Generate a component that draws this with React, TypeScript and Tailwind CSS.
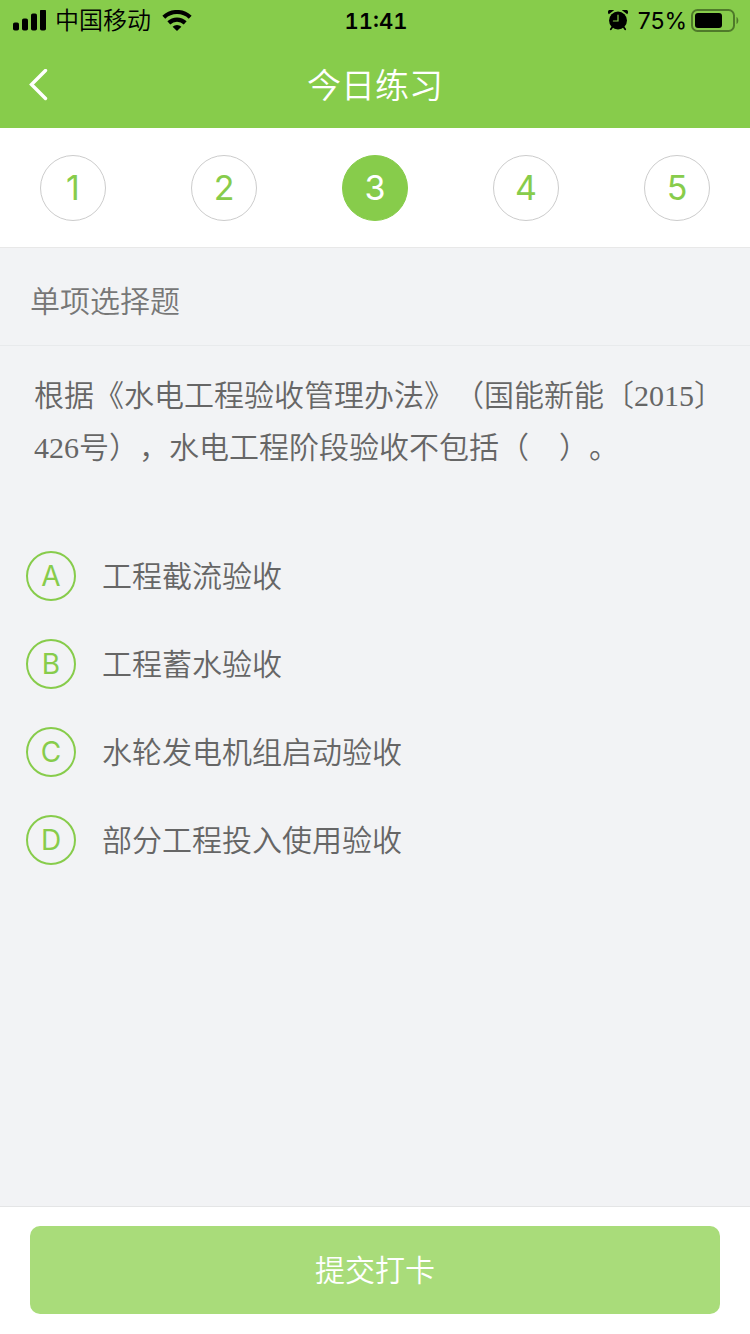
import React, { useState } from 'react';

const steps = [1, 2, 3, 4, 5];

const options = [
  { key: 'A', text: '工程截流验收' },
  { key: 'B', text: '工程蓄水验收' },
  { key: 'C', text: '水轮发电机组启动验收' },
  { key: 'D', text: '部分工程投入使用验收' },
];

function SignalIcon() {
  return (
    <svg className="h-[22px] w-[34px]" viewBox="0 0 34 22" fill="currentColor" aria-hidden="true">
      <rect x="0" y="12.5" width="6" height="8" rx="1.8" />
      <rect x="9" y="8.5" width="6" height="12" rx="1.8" />
      <rect x="18" y="3.5" width="6" height="17" rx="1.8" />
      <rect x="27" y="-0.5" width="6" height="21" rx="1.8" />
    </svg>
  );
}

function WifiIcon() {
  return (
    <svg className="h-[22px] w-[30px]" viewBox="0 0 30 22" aria-hidden="true">
      <g fill="none" stroke="currentColor" strokeWidth="4.2">
        <path d="M1.8 7.2a19.4 19.4 0 0 1 26.4 0" />
        <path d="M6.8 12.9a12 12 0 0 1 16.4 0" />
      </g>
      <path d="M10.6 16.8a6.6 6.6 0 0 1 8.8 0L15 21z" fill="currentColor" />
    </svg>
  );
}

function AlarmIcon() {
  return (
    <svg className="h-[22px] w-5" viewBox="0 0 20 22" fill="none" aria-hidden="true">
      <circle cx="10" cy="10.5" r="9" fill="currentColor" />
      <path d="M0.8 4.2A3.2 3.2 0 0 1 6 0.2z" fill="currentColor" />
      <path d="M19.2 4.2A3.2 3.2 0 0 0 14 0.2z" fill="currentColor" />
      <path d="M4.4 17l-1.6 2.2M15.6 17l1.6 2.2" stroke="currentColor" strokeWidth="1.8" strokeLinecap="round" />
      <path d="M10 5.2v5.8H5.4" stroke="#87cc4b" strokeWidth="1.2" strokeLinecap="round" />
    </svg>
  );
}

function BatteryIcon() {
  return (
    <svg className="h-6 w-12" viewBox="0 0 48 24" aria-hidden="true">
      <rect x="1" y="1" width="42" height="21" rx="5.5" fill="none" stroke="#4f7a2a" strokeWidth="2" />
      <rect x="4" y="4" width="27" height="15" rx="3" fill="currentColor" />
      <path d="M45.5 8c2.4 1 2.4 6 0 7z" fill="#4f7a2a" />
    </svg>
  );
}

export default function App() {
  const [current, setCurrent] = useState(3);
  const [answer, setAnswer] = useState('');

  return (
    <div className="flex min-h-screen flex-col bg-[#f2f3f5] font-['Inter','Noto_Sans_CJK_SC',sans-serif] font-[350]">
      <header className="bg-[#87cc4b]">
        <div className="grid h-[42px] grid-cols-3 items-center pr-[11px] pl-[13px] text-2xl leading-10 text-black">
          <div className="flex items-center">
            <SignalIcon />
            <span className="mr-[11px] ml-2 whitespace-nowrap">中国移动</span>
            <WifiIcon />
          </div>
          <span className="text-center text-[22px] font-semibold tabular-nums">11:41</span>
          <div className="flex items-center justify-end">
            <AlarmIcon />
            <span className="mr-1 ml-[10px] text-[23px] font-normal">75%</span>
            <BatteryIcon />
          </div>
        </div>
        <div className="grid h-[86px] grid-cols-[1fr_auto_1fr] items-center px-7 text-white">
          <button type="button" aria-label="返回" className="justify-self-start">
            <svg className="h-8 w-[22px]" viewBox="0 0 22 32" fill="none" aria-hidden="true">
              <path d="M17.5 1.5L3.5 15.5l14 14" stroke="currentColor" strokeWidth="3.4" strokeLinecap="round" />
            </svg>
          </button>
          <h1 className="text-[34px] font-[350]">今日练习</h1>
        </div>
      </header>

      <nav className="flex h-[120px] items-center justify-between border-b border-[#e8e8e8] bg-white px-10">
        {steps.map((n) => (
          <button
            key={n}
            type="button"
            onClick={() => setCurrent(n)}
            className={`size-[66px] rounded-full border text-[34px] font-normal ${
              n === current
                ? 'border-[#87cc4b] bg-[#87cc4b] text-white'
                : 'border-[#cccccc] bg-white text-[#87cc4b]'
            }`}
          >
            {n}
          </button>
        ))}
      </nav>

      <main className="flex-1">
        <h2 className="flex h-[98px] items-center border-b border-[#e8eaec] px-[30px] pt-[10px] text-[30px] font-[350] text-[#777777]">
          单项选择题
        </h2>
        <p
          id="question"
          className="pt-6 pr-[26px] pl-[34px] font-['Liberation_Serif','Noto_Sans_CJK_SC',serif] text-[30px] leading-[52px] text-[#666666] [text-spacing-trim:space-all]"
        >
          根据《水电工程验收管理办法》（国能新能〔2015〕426号），水电工程阶段验收不包括（　）。
        </p>
        <div role="radiogroup" aria-labelledby="question" className="mt-[58px] flex flex-col">
          {options.map((o) => (
            <label key={o.key} className="flex h-[88px] items-center gap-[26px] px-[26px]">
              <span className="grid place-items-center">
                <input
                  type="radio"
                  name="answer"
                  value={o.key}
                  checked={answer === o.key}
                  onChange={() => setAnswer(o.key)}
                  className="peer col-start-1 row-start-1 size-[50px] appearance-none rounded-full border-2 border-[#87cc4b] checked:bg-[#87cc4b]"
                />
                <span className="col-start-1 row-start-1 text-[28px] font-normal text-[#87cc4b] peer-checked:text-white">
                  {o.key}
                </span>
              </span>
              <span className="text-[30px] text-[#666666]">{o.text}</span>
            </label>
          ))}
        </div>
      </main>

      <footer className="border-t border-[#e4e5e6] bg-white px-[30px] pt-[19px] pb-5">
        <button type="button" className="h-[88px] w-full rounded-[10px] bg-[#a9dc7a] text-[30px] text-white">
          提交打卡
        </button>
      </footer>
    </div>
  );
}
